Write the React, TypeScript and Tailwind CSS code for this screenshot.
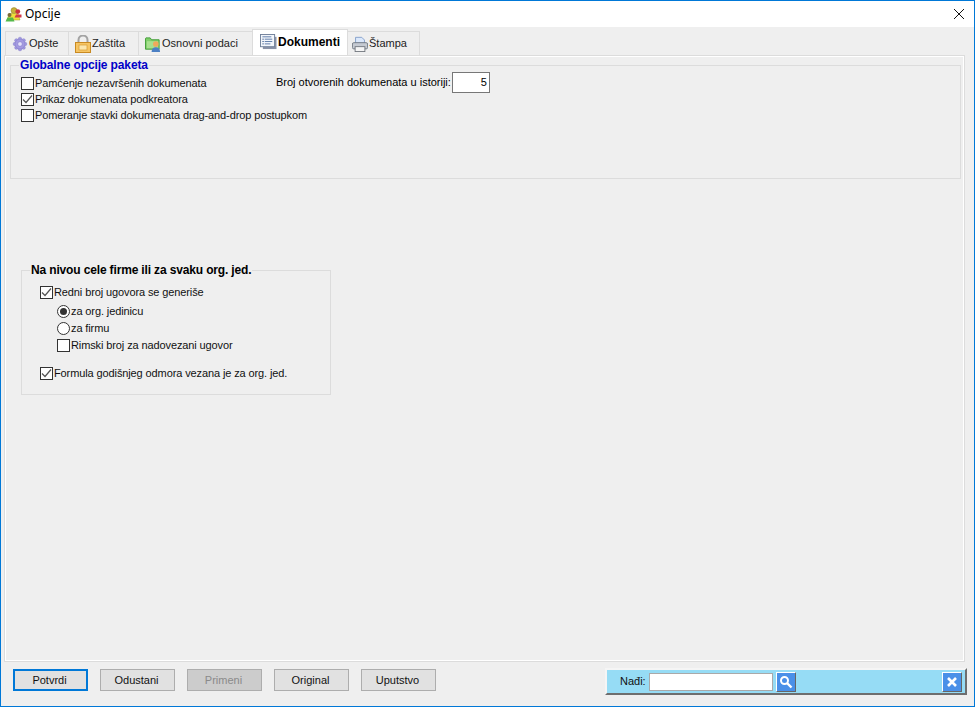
const FONT = "font-['Liberation_Sans','Noto_Sans',sans-serif]";

function GearIcon() {
  return (
    <svg width="16" height="18" viewBox="0 0 18 18" className="shrink-0">
      <g fill="#a49be0" stroke="#7c74c8" strokeWidth="0.5">
        <circle cx="9" cy="3.2" r="1.9" />
        <circle cx="9" cy="14.8" r="1.9" />
        <circle cx="3.2" cy="9" r="1.9" />
        <circle cx="14.8" cy="9" r="1.9" />
        <circle cx="4.9" cy="4.9" r="1.9" />
        <circle cx="13.1" cy="4.9" r="1.9" />
        <circle cx="4.9" cy="13.1" r="1.9" />
        <circle cx="13.1" cy="13.1" r="1.9" />
        <circle cx="9" cy="9" r="5.6" />
      </g>
      <circle cx="9" cy="9" r="2.6" fill="#e4e1fa" stroke="#7c74c8" strokeWidth="0.6" />
    </svg>
  );
}

function LockIcon() {
  return (
    <svg width="16" height="18" viewBox="0 0 16 18" className="shrink-0">
      <path d="M3.5 8V5a4.5 4.5 0 0 1 9 0V8" fill="none" stroke="#a3a3a3" strokeWidth="2" />
      <rect x="0.5" y="7.5" width="15" height="10" fill="#f6c564" stroke="#c98a22" />
      <rect x="4" y="10" width="8" height="5" fill="#fbe6ae" stroke="#d69a35" strokeWidth="0.7" />
    </svg>
  );
}

function FolderUserIcon() {
  return (
    <svg width="16" height="18" viewBox="0 0 17 18" className="shrink-0">
      <path d="M0.5 3V14.5H15V4.5H7L5.5 2.5H1Z" fill="#7fcf6a" stroke="#3f9a35" />
      <rect x="2" y="6" width="12" height="7.5" fill="#a8e08f" />
      <circle cx="11.5" cy="9" r="3" fill="#f0a95c" />
      <path d="M7 17.5C7 14 9 12.5 11.5 12.5S16 14 16 17.5Z" fill="#4c80c4" />
    </svg>
  );
}

function DocsIcon() {
  return (
    <svg width="17" height="16" viewBox="0 0 18 17" className="shrink-0">
      <rect x="3" y="3" width="14.5" height="13" fill="#8b93a8" />
      <rect x="0.5" y="0.5" width="15" height="13" fill="#f3f6fb" stroke="#6f7f99" />
      <path d="M2.5 3H12M5 5.5H13M5 8H13M5 10.5H11" stroke="#5b79a8" />
      <path d="M2.5 5.5H4M2.5 8H4M2.5 10.5H4" stroke="#3e5f90" />
    </svg>
  );
}

function PrinterIcon() {
  return (
    <svg width="16" height="18" viewBox="0 0 18 18" className="shrink-0">
      <path d="M4 8V1.5H11L14 4.5V8Z" fill="#dbe8fb" stroke="#7f9cc8" />
      <rect x="0.5" y="7.5" width="17" height="7" rx="1.5" fill="#c5cad2" stroke="#6f7680" />
      <rect x="3.5" y="12" width="11" height="5.5" fill="#f5f5f5" stroke="#70757c" />
    </svg>
  );
}

function AppIcon() {
  return (
    <svg width="17" height="15" viewBox="0 0 17 15" className="shrink-0">
      <circle cx="9" cy="3.6" r="3" fill="#c8b23a" stroke="#8a7a20" strokeWidth="0.5" />
      <path d="M2 13L4.5 6.5H13L15 13Z" fill="#ecdf3a" stroke="#a39a20" strokeWidth="0.5" />
      <circle cx="12.8" cy="4.6" r="2.4" fill="#c8323f" />
      <path d="M9.5 10.5L11 7.5H16.5V10.5Z" fill="#d23a48" />
      <path d="M0.5 14.5L2.5 10.5H8L9.5 14.5Z" fill="#55b84a" />
      <circle cx="4.5" cy="8" r="2" fill="#7a6a3a" />
    </svg>
  );
}

function Check({ checked }: { checked?: boolean }) {
  return (
    <span className="w-[13px] h-[13px] shrink-0 border border-[#333333] bg-white flex items-center justify-center">
      {checked && (
        <svg width="11" height="11" viewBox="0 0 11 11">
          <path d="M1 5.5L4 8.5L10 1.5" fill="none" stroke="#555555" strokeWidth="1.2" />
        </svg>
      )}
    </span>
  );
}

function CheckRow({ label, checked, tall }: { label: string; checked?: boolean; tall?: boolean }) {
  return (
    <div className={`flex items-center ${tall ? "h-[17px]" : "h-[16px]"} gap-px text-[#111111] tracking-[-0.11px]`}>
      <Check checked={checked} />
      <span className="whitespace-nowrap">{label}</span>
    </div>
  );
}

function RadioRow({ label, checked }: { label: string; checked?: boolean }) {
  return (
    <div className="flex items-center h-[17px] gap-px text-[#111111] tracking-[-0.11px]">
      <span className="w-[13px] h-[13px] shrink-0 rounded-full border border-[#333333] bg-white flex items-center justify-center">
        {checked && <span className="w-[7px] h-[7px] rounded-full bg-[#333333]" />}
      </span>
      <span className="whitespace-nowrap">{label}</span>
    </div>
  );
}

function Tab({ icon, label, active, cls }: { icon: React.ReactNode; label: string; active?: boolean; cls: string }) {
  return (
    <div
      className={
        active
          ? `${cls} h-[26px] -ml-px -mr-px z-10 flex items-center gap-px pb-[2px] bg-white border border-b-0 border-[#dcdcdc] font-bold text-[12px] text-black`
          : `${cls} h-[24px] -ml-px first:ml-0 flex items-center gap-px bg-[#efefef] border border-b-0 border-[#dcdcdc] text-[#222222]`
      }
    >
      {icon}
      <span className="whitespace-nowrap">{label}</span>
    </div>
  );
}

function Btn({ label, primary, disabled }: { label: string; primary?: boolean; disabled?: boolean }) {
  const look = primary
    ? "border-2 border-[#0078d7] bg-[#e1e1e1] text-[#111111]"
    : disabled
      ? "border border-[#adadad] bg-[#cccccc] text-[#8a8a8a]"
      : "border border-[#adadad] bg-[#e1e1e1] text-[#111111]";
  return <div className={`w-[75px] h-[22px] flex items-center justify-center pr-[2px] ${look}`}>{label}</div>;
}

export default function App() {
  return (
    <div className={`${FONT} w-[975px] h-[707px] flex flex-col bg-[#efefef] border border-[#0078d7] text-[11px] leading-none overflow-hidden`}>
      <div className="h-[26px] shrink-0 bg-white flex items-center pl-[4px] pr-[9px] gap-[3px]">
        <AppIcon />
        <span className="font-['Noto_Sans',sans-serif] text-[12px] text-black">Opcije</span>
        <svg width="12" height="12" viewBox="0 0 12 12" className="ml-auto">
          <path d="M1 1L11 11M11 1L1 11" stroke="#111111" strokeWidth="1" />
        </svg>
      </div>

      <div className="flex items-end h-[28px] shrink-0 pl-[4px]">
        <Tab cls="w-[64px] pl-[6px]" icon={<GearIcon />} label="Opšte" />
        <Tab cls="w-[71px] pl-[6px]" icon={<LockIcon />} label="Zaštita" />
        <Tab cls="w-[115px] pl-[6px]" icon={<FolderUserIcon />} label="Osnovni podaci" />
        <Tab cls="w-[96px] pl-[7px]" icon={<DocsIcon />} label="Dokumenti" active />
        <Tab cls="w-[74px] pl-[5px]" icon={<PrinterIcon />} label="Štampa" />
      </div>

      <div className="w-[961px] h-[607px] ml-[3px] shrink-0 border-2 border-white outline outline-1 outline-[#dcdcdc] -outline-offset-1 pl-[4px] pr-[2px] pt-[2px]">
        <fieldset className="h-[120px] border border-[#dcdcdc]">
          <legend className="ml-[8px] px-px h-[12px] leading-[12px] font-bold text-[#0000c8] text-[12px] tracking-[-0.13px]">Globalne opcije paketa</legend>
          <div className="flex pl-[10px] pt-[4px]">
            <div className="w-[255px] flex flex-col">
              <CheckRow label="Pamćenje nezavršenih dokumenata" />
              <CheckRow label="Prikaz dokumenata podkreatora" checked />
              <CheckRow label="Pomeranje stavki dokumenata drag-and-drop postupkom" />
            </div>
            <div className="flex items-center gap-px h-[21px] -mt-[3px]">
              <span className="whitespace-nowrap">Broj otvorenih dokumenata u istoriji:</span>
              <div className="w-[38px] h-[21px] bg-white border border-[#777777] flex items-center justify-end pr-[2px]">5</div>
            </div>
          </div>
        </fieldset>

        <fieldset className="mt-[85px] ml-[11px] w-[310px] h-[131px] border border-[#dcdcdc]">
          <legend className="ml-[8px] px-px h-[12px] leading-[12px] font-bold text-[12px] text-black tracking-[-0.15px]">Na nivou cele firme ili za svaku org. jed.</legend>
          <div className="pl-[18px] pt-[8px] flex flex-col">
            <CheckRow label="Redni broj ugovora se generiše" checked />
            <div className="pl-[17px] pt-[3px] flex flex-col">
              <RadioRow label="za org. jedinicu" checked />
              <RadioRow label="za firmu" />
              <CheckRow label="Rimski broj za nadovezani ugovor" tall />
            </div>
            <div className="pt-[11px]">
              <CheckRow label="Formula godišnjeg odmora vezana je za org. jed." checked />
            </div>
          </div>
        </fieldset>
      </div>

      <div className="flex-1 flex items-start pt-[7px] pl-[12px] pr-[7px]">
        <div className="flex gap-[12px]">
          <Btn label="Potvrdi" primary />
          <Btn label="Odustani" />
          <Btn label="Primeni" disabled />
          <Btn label="Original" />
          <Btn label="Uputstvo" />
        </div>
        <div className="ml-auto w-[362px] h-[27px] -mt-[1px] flex items-center bg-[#96dcf5] border-2 border-t-[#f5f5f5] border-l-[#f5f5f5] border-r-[#6e6e6e] border-b-[#6e6e6e] pl-[13px] pr-[3px] text-[#111111]">
          <span className="w-[29px] shrink-0">Nađi:</span>
          <div className="w-[124px] h-[18px] bg-white border border-[#a9a9a9]" />
          <div className="ml-[3px] w-[20px] h-[20px] bg-[#4a90e8] border border-t-white border-l-white border-r-[#666666] border-b-[#666666] flex items-center justify-center">
            <svg width="14" height="14" viewBox="0 0 14 14">
              <circle cx="5.5" cy="5.5" r="3.5" fill="none" stroke="white" strokeWidth="2" />
              <path d="M8 8L12.5 12.5" stroke="white" strokeWidth="2.4" />
            </svg>
          </div>
          <div className="ml-auto w-[20px] h-[20px] bg-[#4a90e8] border border-t-white border-l-white border-r-[#666666] border-b-[#666666] flex items-center justify-center">
            <svg width="12" height="12" viewBox="0 0 12 12">
              <path d="M2 2L10 10M10 2L2 10" stroke="white" strokeWidth="2.6" />
            </svg>
          </div>
        </div>
      </div>
    </div>
  );
}
